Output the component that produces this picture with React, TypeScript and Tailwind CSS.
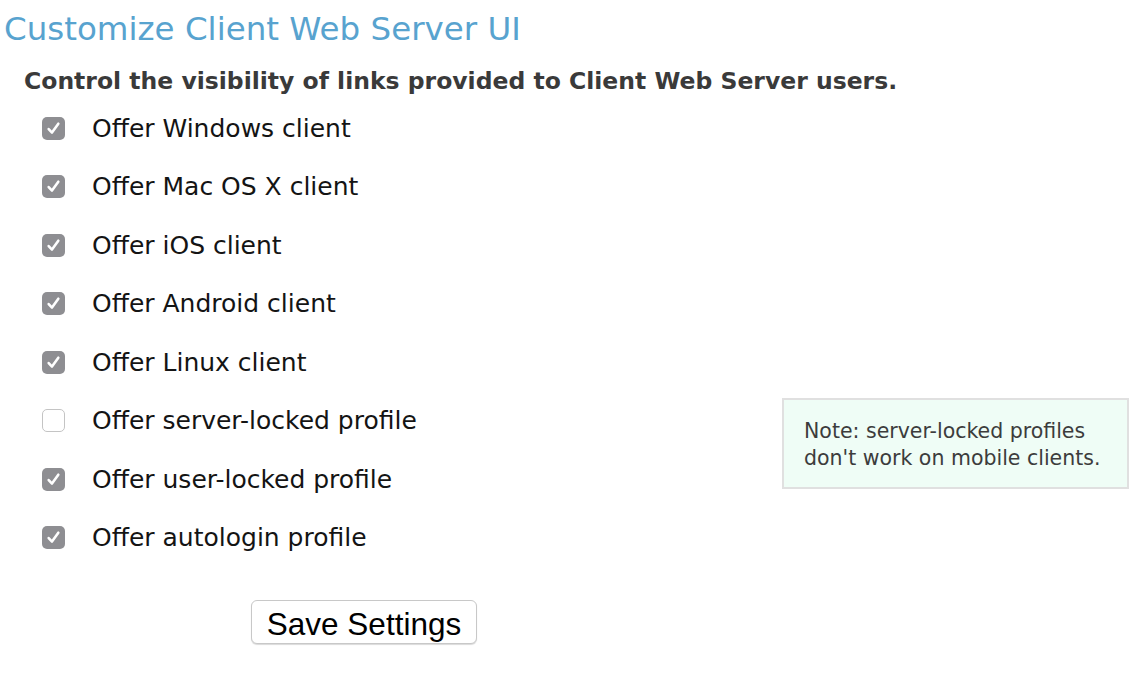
import { useState } from "react";

const options = [
  { label: "Offer Windows client", checked: true },
  { label: "Offer Mac OS X client", checked: true },
  { label: "Offer iOS client", checked: true },
  { label: "Offer Android client", checked: true },
  { label: "Offer Linux client", checked: true },
  { label: "Offer server-locked profile", checked: false },
  { label: "Offer user-locked profile", checked: true },
  { label: "Offer autologin profile", checked: true },
];

function Checkbox({ checked, onClick }: { checked: boolean; onClick: () => void }) {
  return (
    <button
      type="button"
      onClick={onClick}
      className={
        checked
          ? "flex h-[23px] w-[23px] items-center justify-center rounded-[5px] bg-[#8e8e92]"
          : "flex h-[23px] w-[23px] items-center justify-center rounded-[5px] border border-[#c4c4c4] bg-white"
      }
    >
      {checked && (
        <svg width="15" height="15" viewBox="0 0 14 14" fill="none">
          <path d="M2.5 7.5 L5.6 10.8 L11.5 2.5" stroke="white" strokeWidth="2.4" strokeLinecap="round" strokeLinejoin="round" />
        </svg>
      )}
    </button>
  );
}

export default function App() {
  const [values, setValues] = useState(options.map((o) => o.checked));

  const toggle = (i: number) => {
    const next = [...values];
    next[i] = !next[i];
    setValues(next);
  };

  return (
    <div className="h-[680px] w-[1140px] bg-white font-['DejaVu_Sans',sans-serif]">
      <h1 className="pl-[4px] pt-[7px] text-[32.5px] leading-[44px] text-[#58a3cf]">
        Customize Client Web Server UI
      </h1>
      <p className="mt-[17px] pl-[24px] text-[23.5px] font-bold leading-[26px] text-[#3a3a3a]">
        Control the visibility of links provided to Client Web Server users.
      </p>

      <div className="flex">
        <div className="flex w-[782px] flex-col pl-[42px] pt-[5px]">
          {options.map((o, i) => (
            <label key={o.label} className="flex h-[58.5px] items-center">
              <Checkbox checked={values[i]} onClick={() => toggle(i)} />
              <span className="ml-[27px] text-[25px] text-[#141414]">{o.label}</span>
            </label>
          ))}
        </div>
        <div className="pt-[304px]">
          <div className="w-[347px] border-2 border-[#e0e0e0] bg-[#effdf6] pb-[15px] pl-[20px] pt-[18px] text-[20.5px] leading-[27px] text-[#3c3c3c]">
            Note: server-locked profiles
            <br />
            don't work on mobile clients.
          </div>
        </div>
      </div>

      <div className="mt-[33px] pl-[251px]">
        <button className="h-[44px] w-[226px] rounded-[6px] border border-[#c8c8c8] bg-white font-['Liberation_Sans',sans-serif] text-[31.5px] text-black shadow-[0_1px_1px_rgba(0,0,0,0.15)]">
          Save Settings
        </button>
      </div>
    </div>
  );
}
